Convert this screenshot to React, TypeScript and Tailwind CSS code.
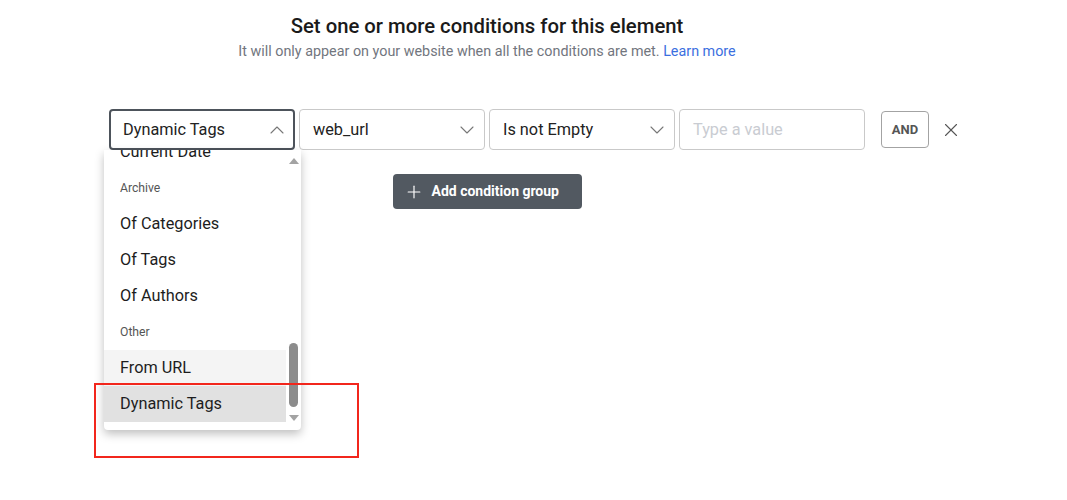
import React from "react";
import { ChevronDown, ChevronUp, Plus, X } from "lucide-react";

const font = { fontFamily: "Roboto, 'Liberation Sans', sans-serif" };

function Select({ label, open }: { label: string; open?: boolean }) {
  return (
    <div
      className={
        "relative flex h-[41px] w-[186px] items-center justify-between rounded-[4px] bg-white " +
        (open
          ? "border-2 border-[#4d535b] pl-[12px] pr-[4px]"
          : "border border-[#c9c9c9] pl-[13px] pr-[5px]")
      }
    >
      <span className="pt-[2px] text-[16.3px] text-[#222]">{label}</span>
      {open ? (
        <ChevronUp size={24} strokeWidth={1.1} className="text-[#777]" />
      ) : (
        <ChevronDown size={24} strokeWidth={1.1} className="text-[#777]" />
      )}
    </div>
  );
}

function Item({ label, kind }: { label: string; kind?: "header" | "hover" | "active" }) {
  if (kind === "header") {
    return (
      <div className="flex h-[36px] items-center pl-[16px] text-[12.2px] text-[#555]">{label}</div>
    );
  }
  return (
    <div
      className={
        "flex h-[36px] items-center pl-[16px] text-[16.3px] text-[#1d1d1d] " +
        (kind === "hover" ? "bg-[#f4f4f4]" : kind === "active" ? "bg-[#e1e1e1]" : "")
      }
    >
      {label}
    </div>
  );
}

export default function App() {
  return (
    <div className="relative h-[500px] w-full overflow-hidden bg-white" style={font}>
      <div className="flex w-[974px] flex-col items-center pt-[12px]">
        <h1 className="text-[20.3px] font-medium leading-[28px] text-[#1a1a1a]">
          Set one or more conditions for this element
        </h1>
        <p className="mt-[2px] text-[14.35px] leading-[20px] text-[#72767e]">
          It will only appear on your website when all the conditions are met.{" "}
          <span className="text-[#3b6fe0]">Learn more</span>
        </p>
      </div>

      <div className="mt-[47px] flex w-full items-center pl-[109px]">
        <div className="flex items-center gap-[4px]">
          <Select label="Dynamic Tags" open />
          <Select label="web_url" />
          <Select label="Is not Empty" />
          <div className="flex h-[41px] w-[186px] items-center rounded-[4px] border border-[#c9c9c9] pl-[13px] pt-[2px] text-[16.3px] text-[#c9ccd2]">
            Type a value
          </div>
        </div>
        <div className="ml-[16px] flex h-[37px] w-[48px] items-center justify-center rounded-[4px] border border-[#a3a3a3] text-[13px] font-bold text-[#555]">
          AND
        </div>
        <X size={22} strokeWidth={1.2} className="ml-[11px] text-[#555]" />
      </div>

      <div className="mt-[24px] flex w-[974px] justify-center">
        <div className="flex h-[35px] w-[189px] items-center gap-[8px] rounded-[4px] bg-[#525961] pl-[11px] text-[14px] font-bold text-white">
          <Plus size={20} strokeWidth={1.4} />
          Add condition group
        </div>
      </div>

      {/* Dropdown menu */}
      <div className="absolute left-[104px] top-[150px] flex h-[280px] w-[197px] overflow-hidden rounded-b-[4px] bg-white shadow-[0_4px_10px_rgba(0,0,0,0.25)]">
        <div className="flex-1 overflow-hidden">
          <div className="-mt-[16px]">
            <Item label="Current Date" />
            <Item label="Archive" kind="header" />
            <Item label="Of Categories" />
            <Item label="Of Tags" />
            <Item label="Of Authors" />
            <Item label="Other" kind="header" />
            <Item label="From URL" kind="hover" />
            <Item label="Dynamic Tags" kind="active" />
          </div>
        </div>
        <div className="relative w-[15px]">
          <div className="absolute left-[3px] top-[8px] h-0 w-0 border-x-[5px] border-b-[6px] border-x-transparent border-b-[#a3a3a3]" />
          <div className="absolute left-[3px] top-[193px] h-[64px] w-[9px] rounded-full bg-[#8c8c8c]" />
          <div className="absolute left-[3px] top-[265px] h-0 w-0 border-x-[5px] border-t-[6px] border-x-transparent border-t-[#a3a3a3]" />
        </div>
      </div>

      {/* Annotation highlight */}
      <div className="absolute left-[94px] top-[383px] h-[75px] w-[265px] border-2 border-[#f2261c]" />
    </div>
  );
}
